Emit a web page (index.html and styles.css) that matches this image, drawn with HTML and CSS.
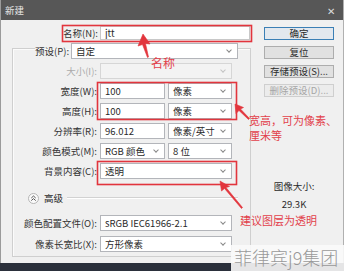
FILE: index.html
```html
<!DOCTYPE html>
<html>
<head>
<meta charset="utf-8">
<link rel="stylesheet" href="styles.css">
</head>
<body>
<div class="win">
  <div class="titlebar">
    <span class="title">新建</span>
    <span class="close">✕</span>
  </div>
  <div class="content">
    <div class="left">
      <div class="name-row">
        <span class="lbl">名称(N):</span>
        <div class="inp wide">jtt</div>
      </div>
      <fieldset class="group">
        <legend class="legend">
          <span class="lbl">预设(P):</span>
          <div class="sel preset">自定<i class="chev"></i></div>
        </legend>
        <div class="rows">
          <span class="lbl dis">大小(I):</span>
          <div class="sel dis-sel"><i class="chev"></i></div>

          <span class="lbl">宽度(W):</span>
          <div class="pair"><div class="inp">100</div><div class="sel">像素<i class="chev"></i></div></div>

          <span class="lbl">高度(H):</span>
          <div class="pair"><div class="inp">100</div><div class="sel">像素<i class="chev"></i></div></div>

          <span class="lbl">分辨率(R):</span>
          <div class="pair"><div class="inp">96.012</div><div class="sel">像素/英寸<i class="chev"></i></div></div>

          <span class="lbl">颜色模式(M):</span>
          <div class="pair"><div class="sel">RGB 颜色<i class="chev"></i></div><div class="sel">8 位<i class="chev"></i></div></div>

          <span class="lbl">背景内容(C):</span>
          <div class="sel">透明<i class="chev"></i></div>
        </div>
        <div class="adv">
          <svg class="adv-ico" width="11" height="11" viewBox="0 0 11 11"><circle cx="5.5" cy="5.5" r="5" fill="#fafafa" stroke="#b5b5b5"/><path d="M3.3 5 L5.5 3 L7.7 5 M3.3 7.6 L5.5 5.6 L7.7 7.6" fill="none" stroke="#555" stroke-width="1"/></svg>
          <span class="adv-txt">高级</span>
          <span class="adv-line"></span>
        </div>
        <div class="rows rows2">
          <span class="lbl">颜色配置文件(O):</span>
          <div class="sel">sRGB IEC61966-2.1<i class="chev"></i></div>
          <span class="lbl">像素长宽比(X):</span>
          <div class="sel">方形像素<i class="chev"></i></div>
        </div>
      </fieldset>
    </div>
    <div class="right">
      <div class="btn primary">确定</div>
      <div class="btn">复位</div>
      <div class="btn">存储预设(S)...</div>
      <div class="btn disabled">删除预设(D)...</div>
      <div class="info">
        <div>图像大小:</div>
        <div class="size">29.3K</div>
      </div>
    </div>
  </div>
</div>

<svg class="overlay" width="344" height="271" viewBox="0 0 344 271">
  <g fill="none" stroke="#e2353d" stroke-width="1.6">
    <rect x="62.5" y="25.5" width="189" height="16"/>
    <rect x="97.5" y="82.5" width="139" height="37"/>
    <rect x="97.5" y="161.5" width="139" height="23"/>
  </g>
  <g fill="#e2353d" stroke="#e2353d">
    <path d="M143 34 L138 46 L142.5 44.5 L147.5 57.5 L148.5 57 L145.5 43.5 L150 44 Z" stroke-width="0.6"/>
    <path d="M235 104 L236 113.5 L239 110.5 L248.5 119.5 L249.5 118.5 L240.5 109 L243.5 107.5 Z" stroke-width="0.6"/>
    <path d="M220 181 L221.5 191 L224.5 188.5 L241.5 208.5 L242.5 207.5 L226 187.5 L229.5 186.5 Z" stroke-width="0.6"/>
  </g>
</svg>
<div class="note n1">名称</div>
<div class="note n2">宽高，可为像素、<br>厘米等</div>
<div class="note n3">建议图层为透明</div>
<div class="watermark">菲律宾j9集团</div>
</body>
</html>
```
FILE: styles.css
```css
* { box-sizing: border-box; margin: 0; padding: 0; }
html, body { width: 344px; height: 271px; overflow: hidden; }
body {
  background: #2b303b;
  font-family: "Noto Sans CJK SC", "Noto Sans", sans-serif;
  font-size: 9.5px;
  color: #2a2a2a;
  position: relative;
}
.win {
  width: 344px;
  height: 263px;
  background: #f0f0f0;
  border-left: 1px solid #9b9b9b;
  border-right: 1px solid #b0b0b0;
  display: flex;
  flex-direction: column;
}
.titlebar {
  height: 20px;
  background: #575757;
  color: #e6e6e6;
  display: flex;
  align-items: center;
  justify-content: space-between;
  padding: 0 8px 0 4px;
  font-size: 9.5px;
}
.close { font-size: 10px; color: #dcdcdc; }
.content {
  display: flex;
  padding: 6px 0 0 11px;
}
.left { width: 241px; }
.name-row {
  display: grid;
  grid-template-columns: 86px 150px;
  column-gap: 2px;
  height: 14px;
  align-items: center;
}
.lbl {
  text-align: right;
  white-space: nowrap;
  line-height: 14px;
  color: #333;
}
.lbl.dis { color: #ababab; }
.inp, .sel {
  height: 16px;
  background: #fff;
  border: 1px solid #b3b5ba;
  line-height: 14px;
  padding-left: 4px;
  white-space: nowrap;
  overflow: hidden;
  position: relative;
}
.inp.wide { height: 14px; line-height: 12px; border-color: #c8c8c8; }
.sel { padding-right: 12px; }
.chev {
  position: absolute;
  right: 6px;
  top: 4px;
  width: 4px;
  height: 4px;
  border-right: 1px solid #888;
  border-bottom: 1px solid #888;
  transform: rotate(45deg);
}
.dis-sel { background: #f3f3f3; border-color: #d6d6d6; }
.dis-sel .chev { border-color: #c4c4c4; }
.group {
  width: 234px;
  margin-top: -2px;
  border: 1px solid #cfcfcf;
  box-shadow: inset 1px 1px 0 #fbfbfb;
  padding: 0 12px 4px 0;
}
.legend {
  display: flex;
  align-items: center;
  gap: 2px;
  margin-left: 22px;
  padding: 5px 0 0 0;
}
.preset { width: 167px; }
.rows {
  display: grid;
  grid-template-columns: 84px 132px;
  column-gap: 3px;
  grid-auto-rows: 16px;
  row-gap: 4px;
  align-items: center;
  margin-top: 4px;
}
.pair {
  display: grid;
  grid-template-columns: 65px 64px;
  column-gap: 3px;
}
.adv {
  display: flex;
  align-items: center;
  height: 16px;
  margin-top: 11px;
  padding-left: 15px;
}
.adv-ico { display: block; }
.adv-txt { margin-left: 5px; }
.adv-line {
  flex: 1;
  height: 2px;
  margin-left: 4px;
  border-top: 1px solid #d2d2d2;
  border-bottom: 1px solid #fff;
}
.rows2 { margin-top: 9px; row-gap: 5px; }
.right {
  width: 70px;
  margin-left: 11px;
  padding-top: 1px;
  display: flex;
  flex-direction: column;
  gap: 6px;
}
.btn {
  height: 13px;
  line-height: 11px;
  text-align: center;
  background: #e1e1e1;
  border: 1px solid #adadad;
  white-space: nowrap;
  font-size: 9.5px;
}
.btn.primary { border-color: #3b7fb5; background: #e3e8ee; }
.btn.disabled { color: #a6a6a6; background: #ececec; border-color: #cfcfcf; }
.info {
  margin-top: 75px;
  padding-right: 10px;
  text-align: center;
  line-height: 16px;
}
.info .size { margin-top: 2px; }
.overlay { position: absolute; left: 0; top: 0; pointer-events: none; }
.note {
  position: absolute;
  color: #e2404a;
  font-size: 11px;
  line-height: 15px;
  white-space: nowrap;
}
.n1 { left: 151px; top: 55px; font-size: 12px; }
.n2 { left: 249px; top: 113px; }
.n3 { left: 240px; top: 213px; }
.watermark {
  position: absolute;
  left: 231px;
  top: 245px;
  width: 113px;
  height: 26px;
  background: rgba(250,250,250,0.9);
  color: #999;
  font-size: 18px;
  line-height: 24px;
  font-weight: 300;
  padding-left: 3px;
  white-space: nowrap;
}
```
